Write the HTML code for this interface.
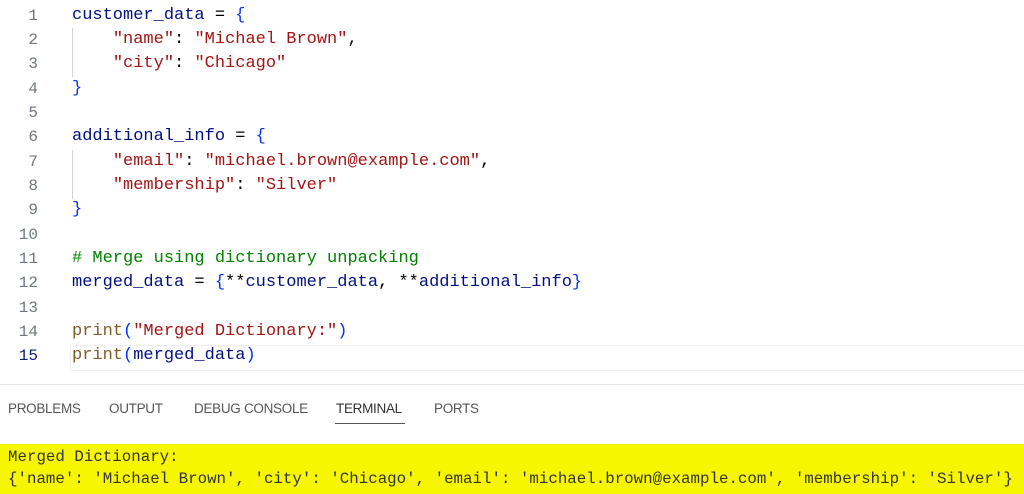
<!DOCTYPE html>
<html><head><style>
body{margin:0;width:1024px;height:494px;background:#fff;overflow:hidden;position:relative;font-family:"Liberation Mono",monospace}
.ln{position:absolute;left:0;width:38px;text-align:right;color:#6e7681;font-size:16px}
.cd{position:absolute;left:72px;font-size:17px;color:#001080;white-space:pre}
.s{color:#a31515}.p{color:#000}.b{color:#0431fa}.c{color:#008000}.f{color:#795e26}
.guide{position:absolute;left:72px;width:1px;background:#d3d3d3}
.tab{position:absolute;top:401px;font-family:"Liberation Sans",sans-serif;font-size:13.5px;color:#555;letter-spacing:-0.3px}
#w{position:absolute;left:0;top:2px;width:1024px;height:380px}
</style></head><body>
<div style="position:absolute;left:70px;top:345px;width:960px;height:24px;border:1px solid #eee;border-right:none"></div>
<div id="w">
<div class="guide" style="top:26px;height:49px"></div>
<div class="guide" style="top:148px;height:49px"></div>
<div class="ln" style="top:5px">1</div><div class="cd" style="top:4px">customer_data <span class="p">=</span> <span class="b">{</span></div>
<div class="ln" style="top:29px">2</div><div class="cd" style="top:28px">    <span class="s">"name"</span><span class="p">:</span> <span class="s">"Michael Brown"</span><span class="p">,</span></div>
<div class="ln" style="top:53px">3</div><div class="cd" style="top:52px">    <span class="s">"city"</span><span class="p">:</span> <span class="s">"Chicago"</span></div>
<div class="ln" style="top:78px">4</div><div class="cd" style="top:77px"><span class="b">}</span></div>
<div class="ln" style="top:102px">5</div>
<div class="ln" style="top:126px">6</div><div class="cd" style="top:125px">additional_info <span class="p">=</span> <span class="b">{</span></div>
<div class="ln" style="top:151px">7</div><div class="cd" style="top:150px">    <span class="s">"email"</span><span class="p">:</span> <span class="s">"michael.brown@example.com"</span><span class="p">,</span></div>
<div class="ln" style="top:175px">8</div><div class="cd" style="top:174px">    <span class="s">"membership"</span><span class="p">:</span> <span class="s">"Silver"</span></div>
<div class="ln" style="top:199px">9</div><div class="cd" style="top:198px"><span class="b">}</span></div>
<div class="ln" style="top:224px">10</div>
<div class="ln" style="top:248px">11</div><div class="cd" style="top:247px"><span class="c"># Merge using dictionary unpacking</span></div>
<div class="ln" style="top:272px">12</div><div class="cd" style="top:271px">merged_data <span class="p">=</span> <span class="b">{</span><span class="p">**</span>customer_data<span class="p">,</span> <span class="p">**</span>additional_info<span class="b">}</span></div>
<div class="ln" style="top:297px">13</div>
<div class="ln" style="top:321px">14</div><div class="cd" style="top:320px"><span class="f">print</span><span class="b">(</span><span class="s">"Merged Dictionary:"</span><span class="b">)</span></div>
<div class="ln" style="top:345px;color:#0b216f">15</div><div class="cd" style="top:344px"><span class="f">print</span><span class="b">(</span>merged_data<span class="b">)</span></div>
</div>
<div style="position:absolute;left:0;top:384px;width:1024px;height:1px;background:#e5e5e5"></div>
<div class="tab" style="left:8px">PROBLEMS</div>
<div class="tab" style="left:109px">OUTPUT</div>
<div class="tab" style="left:194px">DEBUG CONSOLE</div>
<div class="tab" style="left:336px;color:#333">TERMINAL</div>
<div style="position:absolute;left:335px;top:423px;width:70px;height:1px;background:#555"></div>
<div class="tab" style="left:434px">PORTS</div>
<div style="position:absolute;left:0;top:444px;width:1024px;height:50px;background:#f6f600"></div>
<div style="position:absolute;left:8px;top:446px;font-size:15.8px;color:#333;white-space:pre;line-height:22px">Merged Dictionary:
{'name': 'Michael Brown', 'city': 'Chicago', 'email': 'michael.brown@example.com', 'membership': 'Silver'}</div>
</body></html>
